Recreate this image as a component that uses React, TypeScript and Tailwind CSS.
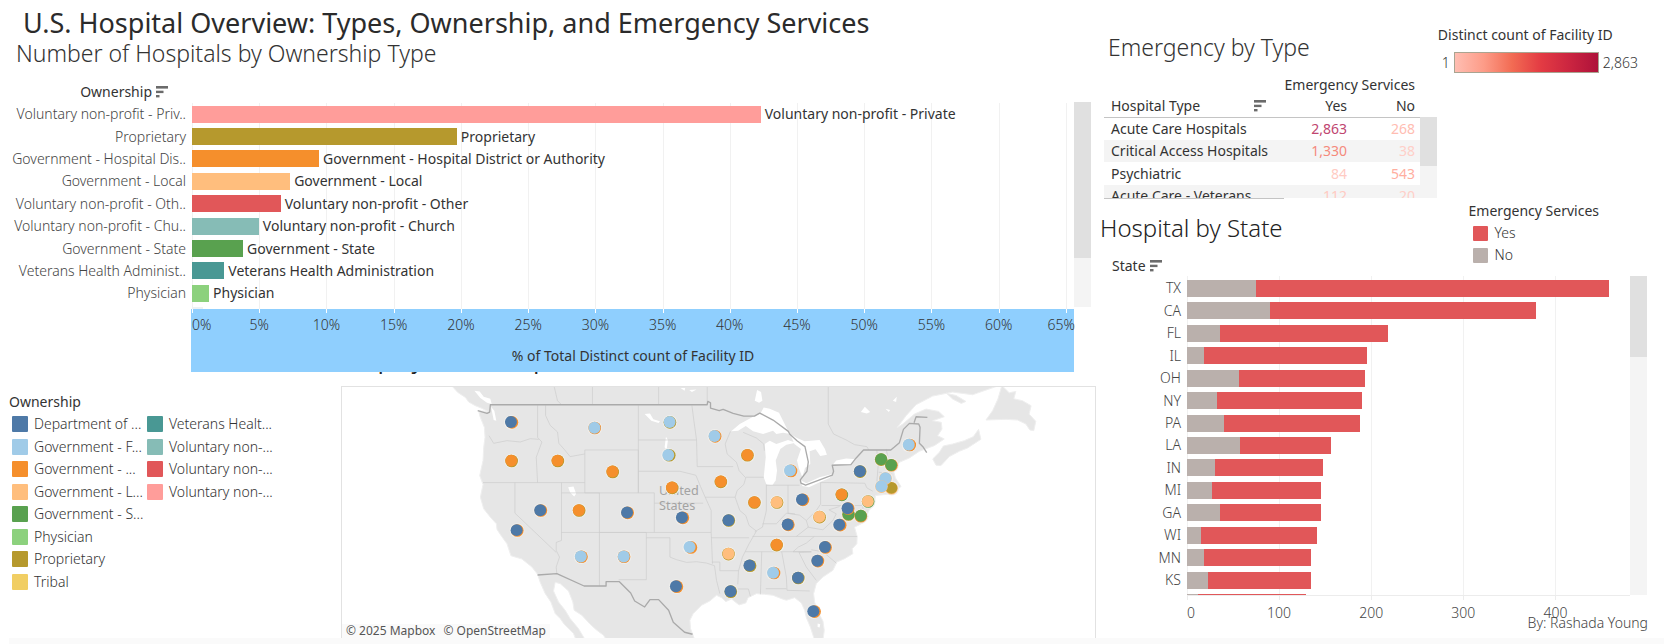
import React from "react";

type Row = { short: string; name: string; pct: number; color: string };

const ownership: Row[] = [
  { short: "Voluntary non-profit - Priv..", name: "Voluntary non-profit - Private", pct: 42.3, color: "#ff9d9a" },
  { short: "Proprietary", name: "Proprietary", pct: 19.7, color: "#b6992d" },
  { short: "Government - Hospital Dis..", name: "Government - Hospital District or Authority", pct: 9.45, color: "#f58f2c" },
  { short: "Government - Local", name: "Government - Local", pct: 7.3, color: "#ffbe7d" },
  { short: "Voluntary non-profit - Oth..", name: "Voluntary non-profit - Other", pct: 6.6, color: "#e15759" },
  { short: "Voluntary non-profit - Chu..", name: "Voluntary non-profit - Church", pct: 4.97, color: "#86bcb6" },
  { short: "Government - State", name: "Government - State", pct: 3.8, color: "#59a14f" },
  { short: "Veterans Health Administ..", name: "Veterans Health Administration", pct: 2.4, color: "#499894" },
  { short: "Physician", name: "Physician", pct: 1.27, color: "#8cd17d" },
];

const MAX_PCT = 65.6;
const pctTicks = [0, 5, 10, 15, 20, 25, 30, 35, 40, 45, 50, 55, 60, 65];

const legendA = [
  ["Department of ...", "#4e79a7"],
  ["Government - F...", "#a0cbe8"],
  ["Government - ...", "#f58f2c"],
  ["Government - L...", "#ffbe7d"],
  ["Government - S...", "#59a14f"],
  ["Physician", "#8cd17d"],
  ["Proprietary", "#b6992d"],
  ["Tribal", "#f1ce63"],
];
const legendB = [
  ["Veterans Healt...", "#499894"],
  ["Voluntary non-...", "#86bcb6"],
  ["Voluntary non-...", "#e15759"],
  ["Voluntary non-...", "#ff9d9a"],
];

const states: [string, number, number][] = [
  ["TX", 75, 458], ["CA", 90, 379], ["FL", 36, 218], ["IL", 19, 195], ["OH", 57, 193],
  ["NY", 33, 190], ["PA", 40, 188], ["LA", 58, 156], ["IN", 30, 148], ["MI", 27, 146],
  ["GA", 36, 146], ["WI", 15, 141], ["MN", 19, 135], ["KS", 23, 135], ["", 12, 129],
];
const MAX_COUNT = 481;
const countTicks = [0, 100, 200, 300, 400];

const tableRows = [
  { type: "Acute Care Hospitals", yes: "2,863", no: "268", yc: "text-[#c04570]", nc: "text-[#ffbdb2]" },
  { type: "Critical Access Hospitals", yes: "1,330", no: "38", yc: "text-[#f58a7c]", nc: "text-[#ffcfc8]" },
  { type: "Psychiatric", yes: "84", no: "543", yc: "text-[#ffcbc3]", nc: "text-[#ffae9f]" },
  { type: "Acute Care - Veterans", yes: "112", no: "20", yc: "text-[#ffcbc3]", nc: "text-[#ffcfc8]" },
];

function SortButton({ label }: { label: string }) {
  return (
    <button type="button" aria-label={label} className="block shrink-0">
      <svg width="12" height="12" viewBox="0 0 12 12" fill="#6b6b6b">
        <rect x="0" y="0" width="12" height="2.6" />
        <rect x="0" y="4.7" width="7.5" height="2.4" />
        <rect x="0" y="9" width="3.5" height="2.4" />
      </svg>
    </button>
  );
}

function Scrollbar({ thumb }: { thumb: string }) {
  return (
    <div className="w-[17px] shrink-0 bg-[#f4f4f4]">
      <div className={"bg-[#e0e0e0] " + thumb} />
    </div>
  );
}

function OwnershipChart() {
  return (
    <section className="pr-[5px]">
      <div className="mt-[15px] flex h-5 w-[168px] items-center justify-end gap-1 text-sm text-[#333]">
        <span>Ownership</span>
        <SortButton label="Sort by ownership" />
      </div>
      <div className="flex">
        <div className="min-w-0 flex-1">
          <div className="flex h-[207px] overflow-hidden pt-px text-sm">
            <div className="grid h-[224px] w-[192px] shrink-0 grid-rows-10 pr-[6px]">
              {ownership.map((r) => (
                <div key={r.name} className="flex items-center justify-end whitespace-nowrap font-light text-[#444]">{r.short}</div>
              ))}
            </div>
            <div className="relative grid h-[224px] min-w-0 flex-1 grid-rows-10">
              {pctTicks.map((t) => (
                <div key={t} className="absolute inset-y-0 w-px bg-[#f1f1f1]" style={{ left: `${(t / MAX_PCT) * 100}%` }} />
              ))}
              {ownership.map((r) => (
                <div key={r.name} className="relative flex items-center">
                  <div className="h-[17px] shrink-0" style={{ width: `${(r.pct / MAX_PCT) * 100}%`, backgroundColor: r.color }} />
                  <span className="ml-1 whitespace-nowrap text-[#333]">{r.name}</span>
                </div>
              ))}
              <div className="relative flex items-center">
                <div className="h-[17px] w-[11px] bg-[#eef2f4]" />
              </div>
            </div>
          </div>
          <div className="relative ml-[191px] h-[63px] bg-[#8fcffe] pl-px text-sm text-[#333]">
            <div className="relative h-8 font-light">
              {pctTicks.map((t) => (
                <div key={t} className="absolute top-0 h-full" style={{ left: `${(t / MAX_PCT) * 100}%` }}>
                  <div className="h-1 w-px bg-white" />
                  <div
                    className={
                      "absolute top-[6px] leading-5 " +
                      (t === 0 ? "left-0" : t === 65 ? "right-[-8px]" : "left-0 -translate-x-1/2")
                    }
                  >
                    {t}%
                  </div>
                </div>
              ))}
            </div>
            <div className="text-center leading-[30px]">% of Total Distinct count of Facility ID</div>
          </div>
        </div>
        <div className="flex h-[205px]">
          <Scrollbar thumb="h-[156px]" />
        </div>
      </div>
    </section>
  );
}

function LegendItem({ label, color }: { label: string; color: string }) {
  return (
    <li className="flex items-center gap-[6px] whitespace-nowrap font-light">
      <span className="size-4 shrink-0 rounded-[1px]" style={{ backgroundColor: color }} />
      {label}
    </li>
  );
}

const B = "#4e79a7";
const L = "#a0cbe8";
const O = "#f58f2c";
const P = "#ffbe7d";
const G = "#59a14f";
const Y = "#b6992d";

const markers: [number, number, string, string, number][] = [
  [512, 125, B, O, 3], [763, 142, L, O, 1], [989, 125, L, Y, 1], [1124, 167, L, O, 2], [985, 224, L, Y, 3],
  [513, 241, O, Y, 1], [652, 241, O, Y, 1], [817, 274, O, Y, 1], [996, 322, O, Y, 1], [600, 390, B, O, 2],
  [529, 450, B, O, 2], [716, 390, O, Y, 1], [861, 397, B, O, 2], [1026, 412, B, O, 3], [722, 529, L, O, 2],
  [851, 529, L, O, 1], [1049, 501, L, O, 4], [1008, 619, B, O, 3], [1223, 224, O, Y, 0], [1143, 304, O, Y, 0],
  [1244, 366, O, Y, 0], [1311, 366, P, Y, 1], [1351, 271, L, O, 3], [1387, 358, B, O, 3], [1166, 420, B, Y, 1],
  [1166, 521, P, Y, 0], [1344, 433, B, O, 2], [1311, 494, O, Y, 0], [1229, 556, B, Y, 2], [1172, 634, B, Y, 1],
  [1300, 578, L, O, 3], [1375, 593, B, Y, 1], [1421, 694, B, O, 4], [1433, 542, B, O, 2], [1456, 501, B, O, 2],
  [1439, 410, P, Y, 1], [1499, 434, B, O, 3], [1527, 402, G, Y, 0], [1524, 384, B, O, 2], [1564, 407, G, O, 0],
  [1585, 363, P, G, 1], [1506, 343, O, G, 1], [1561, 273, B, Y, 1], [1656, 323, Y, P, 0], [1638, 294, L, P, 0],
  [1626, 318, L, P, 0], [1625, 237, G, Y, 0], [1655, 254, G, O, 1], [1708, 193, L, O, 3],
];

function HospitalMap() {
  return (
    <div className="relative h-[252px] min-w-0 flex-1 overflow-hidden border border-b-0 border-[#e2e2e2] bg-white">
      <svg className="block h-full w-full" viewBox="4 18 2264 756" preserveAspectRatio="xMidYMid slice">
        <g fill="#e6e6e6" stroke="#efefef" strokeWidth="3" strokeLinejoin="round">
          <path d="M333 14 352 35 375 50 385 64 405 75 425 83 442 92 415 90 418 105 432 140 434 170 430 200 428 240 418 285 428 312 420 350 430 385 450 410 468 430 470 447 484 468 500 490 512 526 545 536 575 560 592 582 600 606 615 640 632 665 645 700 660 715 672 732 700 760 708 780H736L715 745 690 715 675 690 655 665 640 632 645 606 660 610 685 632 698 665 702 690 725 705 750 732 770 750 790 765 800 780H1065L1052 745 1050 720 1060 700 1085 675 1110 662 1130 645 1145 652 1158 664 1175 656 1198 674 1218 668 1225 652 1250 640 1275 642 1300 645 1325 655 1340 660 1365 652 1385 668 1395 690 1400 712 1412 740 1425 780H1450L1454 750 1450 722 1435 695 1425 665 1422 640 1430 610 1450 590 1480 570 1492 545 1515 535 1540 520 1538 505 1552 490 1553 468 1545 440 1575 425 1588 390 1604 375 1608 345 1655 340 1685 318 1668 292 1662 270 1680 245 1710 232 1740 212 1758 205 1785 195 1815 175 1795 165 1808 145 1806 125 1780 120 1815 108 1798 92 1760 85 1725 100 1690 130 1674 140 1700 105 1730 72 1780 46 1840 34 1900 42 1980 14Z" />
          <path d="M1780 235 1790 254 1805 255 1830 228 1860 212 1885 202 1925 176 1918 146 1902 168 1875 180 1840 190 1812 196 1800 215Z" />
          <path d="M1988 14 1976 55 1960 90 1940 118 2000 116 2035 118 2060 130 2072 148 2084 150 2090 122 2070 100 2076 75 2050 60 2024 54 2030 32 2010 36Z" />
          <path d="M1822 38 1850 44 1880 62 1866 68 1840 55Z" />
        </g>
        <g fill="#fff">
          <path d="M1174 152 1200 130 1240 108 1262 98 1272 80 1290 84 1318 96 1345 150 1352 160 1330 156 1310 160 1300 150 1270 160 1240 152 1218 136 1195 150Z" />
          <path d="M1345 178 1310 190 1290 180 1275 190 1278 230 1272 290 1280 312 1298 314 1308 300 1312 270 1308 240 1322 205 1340 192 1368 186Z" />
          <path d="M1352 160 1372 172 1395 182 1440 178 1456 205 1462 222 1442 226 1428 206 1410 212 1412 250 1396 262 1388 290 1378 264 1372 240 1384 205 1364 190Z" />
          <path d="M1382 298 1400 308 1440 290 1478 280 1470 292 1440 305 1408 320 1388 316Z" />
          <path d="M1480 252 1535 250 1550 236 1520 234 1490 240Z" />
          <path d="M1245 60 1252 28 1264 34 1268 60 1258 66ZM1564 94 1576 78 1592 94 1582 98ZM1638 84 1652 88 1648 94ZM1660 60 1672 48 1670 64Z" />
          <path d="M684 320 700 318 708 340 702 348 690 336ZM914 100 930 98 940 116 960 122 956 127 934 120ZM978 168 984 178 980 208 974 200ZM402 30 418 32 430 48 450 54 454 70 440 66 420 52ZM452 78 462 90 468 120 460 118ZM1022 22 1036 22 1034 30ZM1048 28 1070 26 1056 34ZM1434 730 1442 732 1440 742 1434 740Z" />
        </g>
        <g fill="none" stroke="#cbcbcb" strokeWidth="2" strokeLinejoin="round">
          <path d="M642 18 652 60 662 70M757 18V70M956 18V70M1102 18V70M1466 18V130L1482 160 1520 178 1545 192 1582 198 1588 208M446 165 460 188 500 180 540 184 570 174 596 176M592 74V170L605 184 588 230 592 306M428 306H734M616 74V104L630 134 652 154 656 188 672 206 690 228 734 220M734 208H895V337H734V208M895 74V337H943V456M895 178H1070M1056 74 1062 120 1070 178 1072 258M895 272H1020L1068 284 1082 318 1096 350 1114 390V456L1118 550M943 368H1090M524 306V398L648 516M664 306V480L648 486 648 510 658 530 648 560 650 582M778 337V618M664 456H1114M664 337H778M778 456H919V598H836M919 472H990V530L1010 538 1040 546 1070 544 1100 548 1124 556 1130 600 1140 640" />
          <path d="M1072 258H1180M1172 152 1156 190 1162 220 1190 245 1198 270 1218 292 1212 312 1192 330 1186 350 1200 390 1218 405 1228 435 1250 452 1228 490 1208 530 1196 572 1194 612M1096 350H1186M1218 290H1272M1280 312V390L1268 440 1245 454M1345 314V398L1366 400M1280 314H1380M1443 306V372M1443 306H1460L1576 308 1582 322 1600 332M1446 375H1568M1268 430 1310 430 1340 398 1380 404 1400 420 1430 390 1442 372M1400 420 1406 440 1370 468M1404 440 1450 448 1480 420 1490 400 1468 388 1500 378M1114 472H1228M1238 468H1553M1216 514H1415L1360 514 1376 500 1400 488 1424 468M1266 514 1262 642M1326 514 1340 590 1342 630 1410 632M1278 625H1340M1415 514 1378 516 1400 560 1430 600M1415 508 1450 514 1490 548M1140 571H1196M1194 626H1226L1232 648M1116 545H1140V571M1612 208 1616 255 1612 305 1620 335M1640 205 1652 260M1618 275 1656 278M1614 300 1650 300M1570 376 1570 410 1584 412M1210 155 1250 172 1272 190 1274 210" />
        </g>
        <g fill="none" stroke="#aaa" strokeWidth="4" strokeLinejoin="round">
          <path d="M412 90 440 98 448 94 450 72H1102L1104 62 1112 66 1112 82 1138 90 1150 86 1180 98 1212 106 1244 106 1260 97 1300 118 1346 152 1350 160 1372 180 1396 198 1406 244 1402 272 1382 298 1384 308 1398 314 1440 298 1478 284 1482 272 1478 254 1534 252 1550 232 1572 208H1654L1664 200 1680 186 1692 146 1710 128 1738 130 1742 140 1740 188 1752 200 1762 216M1724 126 1730 108 1764 110" />
          <path d="M592 584 650 580 732 617H798V604H838L872 638 884 662 914 680 930 658H956L986 690 1000 726 1034 756 1058 762" />
        </g>
        <g fill="#a3a3a3" fontSize="38" style={{ fontFamily: '"Noto Sans", sans-serif' }}>
          <text x="957" y="342">United</text>
          <text x="957" y="389">States</text>
        </g>
        {markers.map(([x, y, , ,]) => (
          <circle key={`${x}-${y}`} cx={x + 1} cy={y} r="22" fill="#f0efec" />
        ))}
        {markers.map(([x, y, c, under, dx]) => (
          <g key={`${x}-${y}`}>
            <circle cx={x + dx} cy={y} r="19" fill={under} />
            <circle cx={x} cy={y - 1} r="18" fill={c} />
          </g>
        ))}
      </svg>
      <div className="absolute bottom-0 left-0 flex gap-2 bg-[#fafafa]/90 px-1 text-xs leading-[14px] text-[#555]">
        <a href="#mapbox">© 2025 Mapbox</a>
        <a href="#osm">© OpenStreetMap</a>
      </div>
    </div>
  );
}

function EmergencyTable() {
  return (
    <div className="ml-2 w-[333px]">
      <div className="flex h-[124px] overflow-hidden">
        <table className="w-[316px] table-fixed border-collapse self-start text-sm text-[#333]">
          <colgroup>
            <col className="w-[180px]" />
            <col className="w-[68px]" />
            <col className="w-[68px]" />
          </colgroup>
          <thead>
            <tr className="h-[21px]">
              <th />
              <th colSpan={2} className="whitespace-nowrap pr-[5px] text-right font-normal leading-5">Emergency Services</th>
            </tr>
            <tr className="h-[22px] border-b border-[#c4c4c4]">
              <th className="py-0 pl-[7px] pr-[18px] font-normal">
                <span className="flex items-center justify-between leading-5">
                  Hospital Type
                  <SortButton label="Sort by hospital type" />
                </span>
              </th>
              <th className="pr-[5px] text-right font-normal leading-5">Yes</th>
              <th className="pr-[5px] text-right font-normal leading-5">No</th>
            </tr>
          </thead>
          <tbody>
            {tableRows.map((r) => (
              <tr key={r.type} className="h-[23px] even:h-[22px] even:bg-[#f4f4f4]">
                <td className="whitespace-nowrap pl-[7px] leading-5">{r.type}</td>
                <td className={"pr-[5px] text-right leading-5 " + r.yc}>{r.yes}</td>
                <td className={"pr-[5px] text-right leading-5 " + r.nc}>{r.no}</td>
              </tr>
            ))}
          </tbody>
        </table>
        <div className="mt-[43px] flex">
          <Scrollbar thumb="h-[49px]" />
        </div>
      </div>
      <div className="h-px w-[180px] bg-[#c4c4c4]" />
    </div>
  );
}

function StateChart() {
  return (
    <section>
      <div className="flex h-[77px] justify-between pr-[65px]">
        <div>
          <h2 className="mt-[14px] pl-1 text-2xl font-light leading-[30px] text-[#222]">Hospital by State</h2>
          <div className="mt-[13px] flex h-5 items-center gap-1 pl-4 text-sm text-[#333]">
            <span>State</span>
            <SortButton label="Sort by state" />
          </div>
        </div>
        <div className="pt-px text-sm text-[#333]">
          <div className="leading-[22px]">Emergency Services</div>
          <ul className="pl-1 font-light">
            <li className="flex h-[22px] items-center gap-[7px]"><span className="size-[15px] rounded-[1px] bg-[#e15759]" />Yes</li>
            <li className="flex h-[22px] items-center gap-[7px]"><span className="size-[15px] rounded-[1px] bg-[#bab0ac]" />No</li>
          </ul>
        </div>
      </div>
      <div className="flex pr-[17px] text-sm font-light text-[#444]">
        <div className="-mb-[18px] grid h-[338px] w-[91px] shrink-0 grid-rows-15 pr-[6px] pt-px">
          {states.map(([s]) => (
            <div key={s} className="flex items-center justify-end">{s}</div>
          ))}
        </div>
        <div className="min-w-0 flex-1">
          <div className="relative h-[320px] overflow-hidden border-b border-[#ececec]">
            {countTicks.map((t) => (
              <div key={t} className="absolute inset-y-0 w-px bg-[#f1f1f1]" style={{ left: `${(t / MAX_COUNT) * 100}%` }} />
            ))}
            <div className="relative grid h-[338px] grid-rows-15 pt-px">
              {states.map(([s, no, total]) => (
                <div key={s} className="flex items-center">
                  <div className="h-[17px] bg-[#bab0ac]" style={{ width: `${(no / MAX_COUNT) * 100}%` }} />
                  <div className="h-[17px] bg-[#e15759]" style={{ width: `${((total - no) / MAX_COUNT) * 100}%` }} />
                </div>
              ))}
            </div>
          </div>
          <div className="relative h-[42px]">
            {countTicks.map((t) => (
              <div key={t} className="absolute top-0" style={{ left: `${(t / MAX_COUNT) * 100}%` }}>
                <div className="h-1 w-px bg-[#ececec]" />
                <div className={"absolute top-[7px] leading-5 " + (t === 0 ? "left-0" : "left-0 -translate-x-1/2")}>{t}</div>
              </div>
            ))}
          </div>
        </div>
        <div className="flex h-[319px]">
          <Scrollbar thumb="h-[81px]" />
        </div>
      </div>
    </section>
  );
}

export default function App() {
  return (
    <div className="overflow-hidden bg-white" style={{ fontFamily: '"Noto Sans", "Open Sans", sans-serif' }}>
      <div className="grid grid-cols-[1096fr_568fr]">
        <main className="min-w-0">
          <h1 className="pl-[23px] pt-[6px] text-[27px] leading-[33px] text-[#2b2b2b]">
            U.S. Hospital Overview: Types, Ownership, and Emergency Services
          </h1>
          <h2 className="pl-4 text-[23px] font-light leading-7 text-[#333]">Number of Hospitals by Ownership Type</h2>
          <OwnershipChart />
          <div className="h-[14px] overflow-hidden">
            <h2 className="-mt-[27px] pl-[344px] text-[23px] leading-7 text-[#222]">Map by Ownership</h2>
          </div>
          <div className="flex">
            <div className="w-[341px] shrink-0 pl-[9px] pt-[5px] text-sm text-[#333]">
              <div className="leading-[22px]">Ownership</div>
              <div className="flex gap-[5px] pl-[3px]">
                <ul className="grid h-[180px] w-[130px] grid-rows-8">
                  {legendA.map(([label, color]) => <LegendItem key={label} label={label} color={color} />)}
                </ul>
                <ul className="grid h-[180px] grid-rows-8">
                  {legendB.map(([label, color]) => <LegendItem key={color} label={label} color={color} />)}
                </ul>
              </div>
            </div>
            <HospitalMap />
          </div>
        </main>
        <aside className="relative min-w-0">
          <div className="flex h-[74px] justify-between pr-[26px]">
            <h2 className="pl-3 pt-[31px] text-[23px] font-light leading-8 text-[#333]">Emergency by Type</h2>
            <div className="pt-[25px] text-sm text-[#333]">
              <div className="leading-5">Distinct count of Facility ID</div>
              <div className="mt-[7px] flex items-center gap-1 pl-1 font-light leading-[18px]">
                <span>1</span>
                <div className="h-[21px] w-[145px] border border-[#a9a491] bg-[linear-gradient(to_right,#ffbeb2,#fd9c88,#f26b53,#e33b43,#cb2540,#ae123a)]" />
                <span>2,863</span>
              </div>
            </div>
          </div>
          <EmergencyTable />
          <StateChart />
          <div className="absolute bottom-[5px] right-4 text-sm font-light leading-5 text-[#444]">By: Rashada Young</div>
        </aside>
      </div>
      <footer className="ml-[9px] h-[6px] bg-[#fafafa]" />
    </div>
  );
}
